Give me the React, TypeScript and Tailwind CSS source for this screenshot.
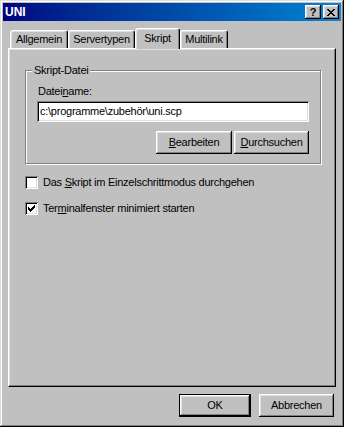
import React from 'react';

const raised =
  'shadow-[inset_-1px_-1px_#000,inset_1px_1px_#fff,inset_-2px_-2px_#808080,inset_2px_2px_#dfdfdf]';
const sunken =
  'shadow-[inset_1px_1px_#808080,inset_-1px_-1px_#fff,inset_2px_2px_#000,inset_-2px_-2px_#dfdfdf]';

const CheckMark = () => {
  // 7x7 pixel check, rows of [x, width]
  const rows: [number, number][][] = [
    [[6, 1]],
    [[5, 2]],
    [[0, 1], [4, 3]],
    [[0, 2], [3, 3]],
    [[0, 5]],
    [[1, 3]],
    [[2, 1]],
  ];
  return (
    <svg width="7" height="7" viewBox="0 0 7 7" shapeRendering="crispEdges">
      {rows.map((r, y) =>
        r.map(([x, w]) => <rect key={`${y}-${x}`} x={x} y={y} width={w} height={1} fill="#000" />)
      )}
    </svg>
  );
};

const CloseGlyph = () => (
  <svg width="8" height="7" viewBox="0 0 8 7" shapeRendering="crispEdges">
    {[
      [[0, 2], [6, 2]],
      [[1, 2], [5, 2]],
      [[2, 4]],
      [[3, 2]],
      [[2, 4]],
      [[1, 2], [5, 2]],
      [[0, 2], [6, 2]],
    ].map((r, y) =>
      r.map(([x, w]) => <rect key={`${y}-${x}`} x={x} y={y} width={w} height={1} fill="#000" />)
    )}
  </svg>
);

const Tab = ({ label, width, active }: { label: string; width: string; active?: boolean }) => (
  <div
    className={`${width} flex items-center justify-center bg-[#c0c0c0] rounded-t-[3px] border-l border-t border-r border-l-white border-t-white border-r-black shadow-[inset_-1px_0_#808080,inset_1px_1px_#dfdfdf] ${
      active ? 'relative z-10 h-[21px] -mb-px pb-[2px]' : 'h-[18px]'
    }`}
  >
    {label}
  </div>
);

const Button = ({ children, width, isDefault }: { children: React.ReactNode; width: string; isDefault?: boolean }) => (
  <div className={`${width} h-[23px] ${isDefault ? 'border border-black' : ''}`}>
    <div className={`h-full flex items-center justify-center bg-[#c0c0c0] ${raised}`}>{children}</div>
  </div>
);

const Checkbox = ({ checked, children }: { checked?: boolean; children: React.ReactNode }) => (
  <div className="flex items-center h-[13px]">
    <div className={`w-[13px] h-[13px] bg-white flex items-center justify-center ${sunken}`}>
      {checked && <CheckMark />}
    </div>
    <span className="ml-[5px]">{children}</span>
  </div>
);

export default function App() {
  return (
    <div className="w-[344px] h-[427px] bg-[#c0c0c0] p-[3px] flex flex-col shadow-[inset_-1px_-1px_#000,inset_1px_1px_#dfdfdf,inset_-2px_-2px_#808080,inset_2px_2px_#fff] font-['Liberation_Sans',Arial,sans-serif] text-[11px] leading-[13px] tracking-[-0.25px] text-black">
      {/* Title bar */}
      <div className="h-[18px] flex items-center bg-linear-to-r from-[#000080] to-[#1084d0] pl-[2px] pr-[2px]">
        <span className="font-bold text-white text-[12px] tracking-normal">UNI</span>
        <div className="ml-auto flex gap-[2px]">
          <div className={`w-[16px] h-[14px] bg-[#c0c0c0] flex items-center justify-center font-bold ${raised}`}>?</div>
          <div className={`w-[16px] h-[14px] bg-[#c0c0c0] flex items-center justify-center ${raised}`}>
            <CloseGlyph />
          </div>
        </div>
      </div>

      <div className="flex-1 flex flex-col px-[5px] pt-[7px]">
        {/* Tabs */}
        <div className="h-[20px] flex items-end pl-[2px]">
          <Tab label="Allgemein" width="w-[58px]" />
          <Tab label="Servertypen" width="w-[67px]" />
          <Tab label="Skript" width="w-[45px]" active />
          <Tab label="Multilink" width="w-[48px]" />
        </div>

        {/* Panel */}
        <div className="h-[339px] bg-[#c0c0c0] border-l border-t border-r border-b border-l-white border-t-white border-r-black border-b-black shadow-[inset_-1px_-1px_#808080,inset_1px_1px_#dfdfdf] pl-[16px] pr-[14px] pt-[21px]">
          {/* Group box */}
          <div className="relative h-[94px] border border-[#808080] shadow-[inset_1px_1px_#fff,1px_1px_#fff] px-[11px] pt-[14px]">
            <span className="absolute -top-[7px] left-[6px] px-[2px] bg-[#c0c0c0]">Skript-Datei</span>
            <div className="ml-px">
              Datei<span className="underline">n</span>ame:
            </div>
            <div className={`mt-[3px] h-[21px] bg-white flex items-center pl-[3px] ${sunken}`}>
              {'c:\\programme\\zubehör\\uni.scp'}
            </div>
            <div className="mt-[9px] flex justify-end gap-[2px]">
              <Button width="w-[76px]">
                <span className="underline">B</span>earbeiten
              </Button>
              <Button width="w-[75px]">
                <span className="underline">D</span>urchsuchen
              </Button>
            </div>
          </div>

          {/* Checkboxes */}
          <div className="mt-[12px] flex flex-col gap-[13px]">
            <Checkbox>
              Das <span className="underline">S</span>kript im Einzelschrittmodus durchgehen
            </Checkbox>
            <Checkbox checked>
              Ter<span className="underline">m</span>inalfenster minimiert starten
            </Checkbox>
          </div>
        </div>

        {/* Dialog buttons */}
        <div className="mt-[7px] flex justify-end gap-[8px] pr-[2px]">
          <Button width="w-[72px]" isDefault>
            OK
          </Button>
          <Button width="w-[75px]">Abbrechen</Button>
        </div>
      </div>
    </div>
  );
}
